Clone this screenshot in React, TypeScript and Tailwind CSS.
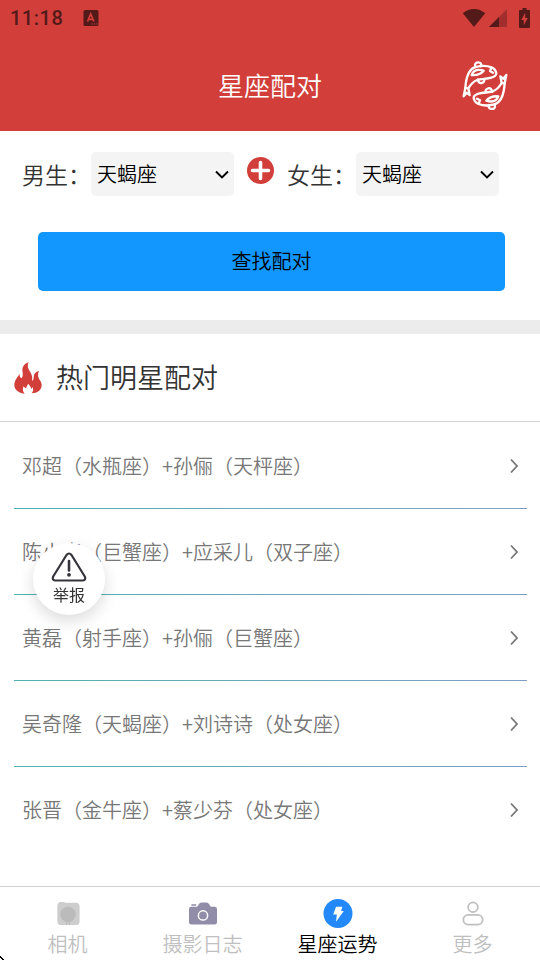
import { useState } from 'react';
import type { ReactNode } from 'react';

const SIGNS = [
  '白羊座', '金牛座', '双子座', '巨蟹座', '狮子座', '处女座',
  '天秤座', '天蝎座', '射手座', '摩羯座', '水瓶座', '双鱼座',
];

const PAIRS = [
  '邓超（水瓶座）+孙俪（天枰座）',
  '陈小春（巨蟹座）+应采儿（双子座）',
  '黄磊（射手座）+孙俪（巨蟹座）',
  '吴奇隆（天蝎座）+刘诗诗（处女座）',
  '张晋（金牛座）+蔡少芬（处女座）',
];

const StatusBar = () => (
  <div className="flex h-9 items-center justify-between pr-[10px] pl-[10px] text-[#541a19]">
    <div className="flex items-center gap-5">
      <span className="font-['Roboto'] text-xl font-medium tracking-wide">11:18</span>
      <svg className="h-4 w-4" viewBox="0 0 16 16" aria-hidden="true">
        <rect x="0.5" width="15" height="16" rx="1.5" fill="currentColor" />
        <path d="M4.5 11.5 7.7 4l3.2 7.5M5.6 9.3h4.2" fill="none" stroke="#d23e3a" strokeWidth="1.7" />
        <path d="M8.5 14h1.2M11 14h1.2M13.3 14h1.2" stroke="#d23e3a" />
      </svg>
    </div>
    <div className="flex items-center">
      <svg className="h-5 w-6" viewBox="0 0 24 20" aria-hidden="true">
        <path d="M12 19 .8 5.2C4 2.500 8 1 12 1s8 1.500 11.200 4.200z" fill="currentColor" />
      </svg>
      <svg className="ml-[3px] h-[18px] w-[18px]" viewBox="0 0 18 18" aria-hidden="true">
        <path d="M18 0v18H0z" fill="#a12e2d" />
        <path d="M10 8v10H0z" fill="currentColor" />
      </svg>
      <svg className="ml-3 h-5 w-[11px]" viewBox="0 0 11 20" aria-hidden="true">
        <path d="M3.500 0h4v2H10q1 0 1 1v16q0 1-1 1H1q-1 0-1-1V3q0-1 1-1h2.500z" fill="currentColor" />
        <path d="M6.200 4.800 2.200 12h2.500v5.200L8.900 10H6.200z" fill="#d23e3a" />
      </svg>
    </div>
  </div>
);

const Fish = () => (
  <g>
    <path d="M11 109 16 84C18 52 26 26 48 21c18-5 34-4 46 1 9 3 14 10 15 19-1 7-8 10-15 12-13 4-28 3-42 7-12 4-20 13-27 25l4 20-9-7z" />
    <path d="M35 45c5-14 19-18 36-13-8 10-20 14-36 13z" />
    <path d="M46 19c-3-9 3-12 9-12s11 5 8 12" />
    <path d="M54 58c0 9 5 12 11 11s9-6 8-12" />
    <path d="m94 23-4 10 9 5" />
    <path d="M16 84l9 1" />
  </g>
);

const PiscesIcon = () => (
  <svg className="h-[50px] w-[50px]" viewBox="0 0 150 150" fill="none" stroke="#fff" strokeWidth="7" strokeLinejoin="round" strokeLinecap="round" aria-hidden="true">
    <Fish />
    <g transform="rotate(180 75 77)">
      <Fish />
    </g>
  </svg>
);

const SignSelect = ({ id, label }: { id: string; label: string }) => {
  const [sign, setSign] = useState('天蝎座');

  return (
    <div className="flex flex-1 items-center">
      <label htmlFor={id} className="w-[69px] shrink-0 text-[23px] whitespace-nowrap text-[#333]">
        {label}
      </label>
      <div className="relative flex-1">
        <select
          id={id}
          value={sign}
          onChange={(e) => setSign(e.target.value)}
          className="h-11 w-full appearance-none rounded-[5px] bg-[#f4f4f4] px-[6px] text-xl text-black"
        >
          {SIGNS.map((s) => (
            <option key={s}>{s}</option>
          ))}
        </select>
        <svg className="pointer-events-none absolute top-[18px] right-1 h-[10px] w-4" viewBox="0 0 16 10" fill="none" stroke="#000" strokeWidth="1.900" aria-hidden="true">
          <path d="m2 1.500 6 6 6-6" />
        </svg>
      </div>
    </div>
  );
};

const PlusIcon = () => (
  <svg className="mx-[13px] mb-[7px] h-[27px] w-[27px] shrink-0" viewBox="0 0 27 27" aria-hidden="true">
    <circle cx="13.500" cy="13.500" r="13.500" fill="#d23e3a" />
    <path d="M13.500 5.500v16M5.500 13.500h16" stroke="#fff" strokeWidth="3.600" strokeLinecap="round" />
  </svg>
);

const FlameIcon = () => (
  <svg className="h-8 w-7" viewBox="0 0 84 96" fill="#d23e3a" aria-hidden="true">
    <path d="M44 1C28 5 23 19 26 32c1 8 0 13-4 17-4-3-6-8-5-14C11 45 1 55 1 69c0 12 9 20 21 24 3 1 7 2 10 2-6-6-7-14-3-22 2 4 5 6 8 6 0-6 3-10 7-14 1 6 8 8 7 15 3-1 4-3 4-6 4 7 3 14-2 20 17-1 30-9 30-25 0-9-6-14-9-21-3-8-2-15 1-21-11 2-16 9-16 19 0 5-1 9-5 11 2-10 0-18-5-27C42 20 39 12 44 1z" />
  </svg>
);

const ReportButton = () => (
  <button
    type="button"
    className="fixed top-[543px] left-[33px] flex h-[72px] w-[72px] flex-col items-center rounded-full bg-white pt-[9px] shadow-[0_6px_16px_rgba(0,0,0,0.14)]"
  >
    <svg className="h-[30px] w-9" viewBox="0 0 36 30" fill="none" stroke="#35343b" strokeWidth="2.200" aria-hidden="true">
      <path d="M15.500 3q2.500-3 5 0L33.800 24.500q1.500 3.500-2 4H4.200q-3.500-.5-2-4z" strokeLinejoin="round" />
      <path d="M18 9v9.500" strokeWidth="2.600" strokeLinecap="round" />
      <circle cx="18" cy="22.800" r="1.900" fill="#35343b" stroke="none" />
    </svg>
    <span className="text-base leading-6 font-normal text-[#333]">举报</span>
  </button>
);

const CameraIcon = () => (
  <svg className="h-[30px] w-[30px]" viewBox="0 0 30 30" aria-hidden="true">
    <path d="M7 3h4l1 1h11q4 0 4 4v15q0 4-4 4H8q-4 0-4-4V7q0-3 3-4z" fill="#cdcdcd" />
    <circle cx="15" cy="16" r="8" fill="#bbb" />
    <path d="M13.500 23v4M16.500 23v4" stroke="#bbb" />
  </svg>
);

const JournalIcon = () => (
  <svg className="h-[30px] w-[30px]" viewBox="0 0 30 30" aria-hidden="true">
    <path d="M3 8h6l2-3q1-1.500 3-1.500h4q2 0 3 1.500l2 3h4q2.500 0 2.500 2.500V24q0 2.500-2.500 2.500H3Q.5 26.500.5 24V10.500Q.5 8 3 8z" fill="#918da9" />
    <path d="M3 6.200h5" stroke="#918da9" strokeWidth="1.600" />
    <circle cx="15" cy="17" r="4.800" fill="none" stroke="#fff" strokeWidth="1.500" />
  </svg>
);

const LuckIcon = () => (
  <svg className="h-[30px] w-[30px]" viewBox="0 0 30 30" aria-hidden="true">
    <circle cx="15" cy="15" r="15" fill="#2389f9" />
    <path d="M13 8h6.500l-1.300 4.500H21L13 23.500l.8-7.500H10z" fill="#fff" />
  </svg>
);

const MoreIcon = () => (
  <svg className="h-[30px] w-[30px]" viewBox="0 0 30 30" fill="none" stroke="#c0c0c0" strokeWidth="1.900" aria-hidden="true">
    <circle cx="15" cy="8.500" r="5" />
    <rect x="5" y="16.500" width="20" height="10" rx="5" />
  </svg>
);

const Tab = ({ icon, label, active }: { icon: ReactNode; label: string; active?: boolean }) => (
  <a href="#" className="flex flex-1 flex-col items-center pt-3">
    {icon}
    <span className={active ? 'text-xl leading-8 text-black' : 'text-xl leading-8 text-[#bfbfbf]'}>{label}</span>
  </a>
);

export default function App() {
  return (
    <div lang="zh-CN" className="flex min-h-screen flex-col bg-white font-['Noto_Sans_CJK_SC',sans-serif] font-[350]">
      <header className="bg-[#d23e3a]">
        <StatusBar />
        <div className="grid h-[95px] grid-cols-[1fr_auto_1fr] items-center pt-[2px] pr-[30px] pl-[30px]">
          <h1 className="col-start-2 text-[26px] font-[350] text-white">星座配对</h1>
          <div className="justify-self-end">
            <PiscesIcon />
          </div>
        </div>
      </header>

      <form className="pt-[21px] pb-[29px]" onSubmit={(e) => e.preventDefault()}>
        <div className="flex items-center pr-[41px] pl-[22px]">
          <SignSelect id="male" label="男生：" />
          <PlusIcon />
          <SignSelect id="female" label="女生：" />
        </div>
        <div className="mt-9 pr-[35px] pl-[38px]">
          <button type="submit" className="h-[59px] w-full rounded-[5px] bg-[#1296ff] pb-[2px] text-xl text-black">
            查找配对
          </button>
        </div>
      </form>

      <section className="flex-1 border-t-[14px] border-[#ececec]">
        <div className="flex h-[88px] items-center gap-[14px] border-b border-[#d3d3d3] pl-[14px]">
          <FlameIcon />
          <h2 className="text-[27px] font-[350] text-[#333]">热门明星配对</h2>
        </div>
        <ul className="pt-px pr-[13px] pl-[14px]">
          {PAIRS.map((pair, i) => (
            <li key={pair}>
              <a href="#" className="flex h-[85px] items-center justify-between pr-[9px] pl-2 text-xl text-[#777]">
                {pair}
                <svg className="h-4 w-2" viewBox="0 0 8 16" fill="none" stroke="#777" strokeWidth="1.800" aria-hidden="true">
                  <path d="m1 1.500 6 6.500-6 6.500" />
                </svg>
              </a>
              {i < PAIRS.length - 1 && <div className="h-px bg-linear-to-r from-[#4db3ae] to-[#7f9fc4]" />}
            </li>
          ))}
        </ul>
      </section>

      <nav className="flex h-[74px] border-t border-[#d3d3d3] bg-white">
        <Tab icon={<CameraIcon />} label="相机" />
        <Tab icon={<JournalIcon />} label="摄影日志" />
        <Tab icon={<LuckIcon />} label="星座运势" active />
        <Tab icon={<MoreIcon />} label="更多" />
      </nav>

      <ReportButton />
      {/* tip of the mouse pointer */}
      <svg className="pointer-events-none fixed bottom-0 left-0 h-1 w-1" viewBox="0 0 4 4" aria-hidden="true">
        <path d="M0 0h1v1h1v1h1v1h1v1H2V3H1V2H0z" fill="#000" />
      </svg>
    </div>
  );
}
